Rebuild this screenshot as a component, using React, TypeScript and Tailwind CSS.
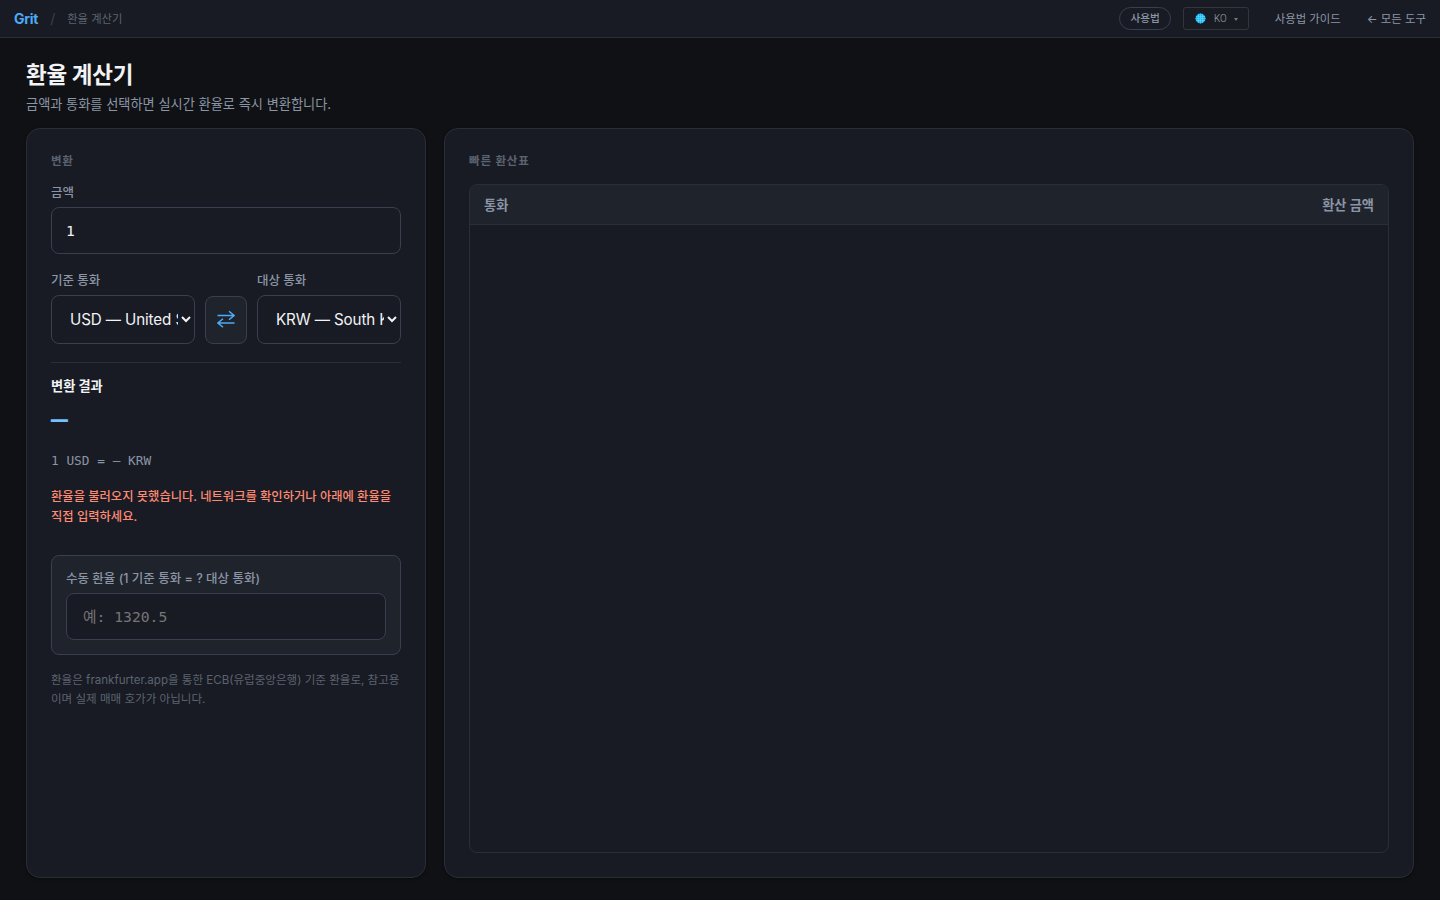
import React, { useState } from "react";

const currencies = [
  { code: "USD", name: "United States Dollar" },
  { code: "KRW", name: "South Korean Won" },
  { code: "EUR", name: "Euro" },
  { code: "JPY", name: "Japanese Yen" },
];

const Header = () => {
  return (
    <header className="flex h-[38px] shrink-0 items-center justify-between border-b border-[#2a2e39] bg-[#181b23] px-3.5">
      <div className="flex items-center">
        <a className="text-[14px] font-bold tracking-[-0.28px] text-[#4dabf7]">Grit</a>
        <span className="ml-3 text-[14px] text-[#3b404d]">/</span>
        <span className="ml-3 pt-px text-[11.3px] text-[#5c6370]">환율 계산기</span>
      </div>
      <div className="flex items-center text-[11.4px] text-[#8b95a5]">
        <button className="h-[23px] w-[52px] rounded-full border border-[#3a3f4f] pt-px pl-px text-[10.7px] font-medium text-[#8b95a5]">
          사용법
        </button>
        <button className="ml-3 flex h-[23px] w-[66px] items-center rounded-[3px] border border-[#333537] pl-[11px] font-['Roboto',sans-serif] text-[11.5px] font-light text-[#a5a5a5]">
          <svg width="11" height="11" viewBox="0 0 11 11">
            <circle cx="5.5" cy="5.5" r="5" fill="#12b5f3" />
            <path
              d="M3.5 1v9M5.5 .5v10M7.5 1v9M1 3.5h9M.5 5.5h10M1 7.5h9"
              stroke="#7fdcff"
              strokeWidth=".5"
            />
          </svg>
          <span className="ml-2 w-[14px] origin-left scale-x-[0.85]">KO</span>
          <svg className="mt-0.5 ml-[6px]" width="4" height="3" viewBox="0 0 4 3">
            <path d="M0 0h4L2 3z" fill="#777" />
          </svg>
        </button>
        <a className="ml-[26px] pt-[3px]">사용법 가이드</a>
        <a className="ml-[26px] pt-[3px]">← 모든 도구</a>
      </div>
    </header>
  );
};

type CurrencySelectProps = {
  label: string;
  value: string;
  onChange: (value: string) => void;
};

const CurrencySelect = ({ label, value, onChange }: CurrencySelectProps) => {
  return (
    <label className="flex w-36 flex-col">
      <span className="mb-1 text-[12.5px] leading-5 font-medium text-[#8b95a5]">{label}</span>
      <select
        value={value}
        onChange={(e) => onChange(e.target.value)}
        className="h-[49px] w-full rounded-[8px] border border-[#3a3f4f] bg-[#181b23] pr-0 pl-3.5 text-[15.2px] tracking-[-0.12px] text-[#f1f3f5]"
      >
        {currencies.map((c) => (
          <option key={c.code} value={c.code}>
            {c.code} — {c.name}
          </option>
        ))}
      </select>
    </label>
  );
};

const ConvertCard = () => {
  const [amount, setAmount] = useState("1");
  const [from, setFrom] = useState("USD");
  const [to, setTo] = useState("KRW");

  const swap = () => {
    setFrom(to);
    setTo(from);
  };

  return (
    <section className="flex w-[400px] shrink-0 flex-col rounded-[14px] border border-[#2a2e39] bg-[#181b23] px-6 pt-[22px] shadow-[0_1px_3px_rgba(0,0,0,0.4)]">
      <h2 className="text-[11.5px] leading-5 font-semibold tracking-[0.7px] text-[#5c6370]">변환</h2>
      <label className="mt-3 flex flex-col">
        <span className="mb-1 text-[12.5px] leading-5 font-medium text-[#8b95a5]">금액</span>
        <input
          value={amount}
          onChange={(e) => setAmount(e.target.value)}
          className="h-[47px] rounded-[8px] border border-[#3a3f4f] bg-[#181b23] px-3.5 font-['DejaVu_Sans_Mono',monospace] text-[14.6px] text-[#f1f3f5]"
        />
      </label>
      <div className="mt-[17px] flex items-end gap-2.5">
        <CurrencySelect label="기준 통화" value={from} onChange={setFrom} />
        <button
          onClick={swap}
          className="flex h-12 w-[42px] items-center justify-center rounded-[8px] border border-[#3a3f4f] bg-[#1f232c] pb-0.5 text-[#4dabf7]"
        >
          <svg
            width="18"
            height="18"
            viewBox="0 0 18 18"
            fill="none"
            stroke="currentColor"
            strokeWidth="1.5"
          >
            <path d="M.5 5.5h16.5M12 1.3 17 5.5l-5 4.2M17.5 13H1M6 8.8 1 13l5 4.2" />
          </svg>
        </button>
        <CurrencySelect label="대상 통화" value={to} onChange={setTo} />
      </div>
      <div className="mt-[18px] border-t border-[#2a2e39] pt-[13px]">
        <h3 className="text-[13.2px] leading-5 font-bold text-[#f1f3f5]">변환 결과</h3>
        <div className="mt-[7px] h-9 font-['Liberation_Mono',monospace] text-[28px] leading-9 font-bold text-[#74c0fc]">
          —
        </div>
        <p className="mt-3 font-['DejaVu_Sans_Mono',monospace] text-[12.8px] leading-5 text-[#8b95a5]">
          1 USD = — KRW
        </p>
      </div>
      <p className="mt-4 text-[12.3px] leading-5 font-medium text-[#ff8a73]">
        환율을 불러오지 못했습니다. 네트워크를 확인하거나 아래에 환율을 직접 입력하세요.
      </p>
      <label className="mt-7 flex flex-col rounded-[8px] border border-[#3a3f4f] bg-[#1f232c] px-3.5 pt-[13px] pb-3.5">
        <span className="mb-1 text-[12.5px] leading-5 font-medium text-[#8b95a5]">
          수동 환율 (1 기준 통화 = ? 대상 통화)
        </span>
        <input
          placeholder="예: 1320.5"
          className="h-[47px] rounded-[8px] border border-[#3a3f4f] bg-[#181b23] pr-3.5 pl-4 font-['DejaVu_Sans_Mono','Noto_Sans_CJK_KR',monospace] text-[14.7px] text-[#f1f3f5] placeholder:text-[#757575]"
        />
      </label>
      <p className="mt-4 text-[11.55px] leading-[19px] break-all text-[#5c6370]">
        환율은 frankfurter.app을 통한 ECB(유럽중앙은행) 기준 환율로, 참고용이며 실제 매매 호가가 아닙니다.
      </p>
    </section>
  );
};

const QuickTable = () => {
  return (
    <section className="flex flex-1 flex-col rounded-[14px] border border-[#2a2e39] bg-[#181b23] px-6 pt-[22px] pb-6 shadow-[0_1px_3px_rgba(0,0,0,0.4)]">
      <h2 className="text-[11.5px] leading-5 font-semibold tracking-[0.8px] text-[#5c6370]">
        빠른 환산표
      </h2>
      <div className="mt-[13px] flex-1 overflow-hidden rounded-[8px] border border-[#2a2e39]">
        <div className="flex h-10 items-center justify-between border-b border-[#2a2e39] bg-[#1f232c] px-3.5 pt-0.5 text-[13.2px] font-semibold text-[#8b95a5]">
          <span>통화</span>
          <span>환산 금액</span>
        </div>
      </div>
    </section>
  );
};

export default function App() {
  return (
    <div className="flex h-screen flex-col overflow-hidden bg-[#101114] font-['Inter','Noto_Sans_CJK_KR',sans-serif]">
      <Header />
      <main className="flex flex-1 flex-col px-[26px] pt-[21px] pb-[22px]">
        <h1 className="text-[22.5px] leading-8 font-bold tracking-[-0.3px] text-[#f1f3f5]">
          환율 계산기
        </h1>
        <p className="mt-[3px] text-[13.2px] leading-5 text-[#8b95a5]">
          금액과 통화를 선택하면 실시간 환율로 즉시 변환합니다.
        </p>
        <div className="mt-3.5 flex flex-1 gap-[18px]">
          <ConvertCard />
          <QuickTable />
        </div>
      </main>
    </div>
  );
}
